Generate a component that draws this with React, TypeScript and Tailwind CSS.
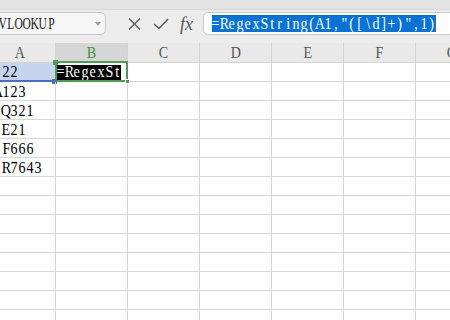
import React from "react";

const columns = ["A", "B", "C", "D", "E", "F", "G"];

// column A is scrolled a little, so its first letters sit under the left edge
const valuesA: { text: string; shift: boolean }[] = [
  { text: "22", shift: false },
  { text: "A123", shift: true },
  { text: "Q321", shift: false },
  { text: "E21", shift: false },
  { text: "F666", shift: false },
  { text: "R7643", shift: false },
];

// half-width serif text: every character takes an 8px cell, like SimSun in the sheet
function Mono({ text, className = "", narrow = false }: { text: string; className?: string; narrow?: boolean }) {
  return (
    <span className={`inline-flex whitespace-nowrap ${className}`}>
      {text.split("").map((ch, i) => (
        <span key={i} className="inline-flex w-[8px] shrink-0 justify-center">
          <span className={`inline-block ${narrow ? "scale-x-[0.72]" : "scale-x-[0.88]"}`}>{ch}</span>
        </span>
      ))}
    </span>
  );
}

function HeaderRow() {
  return (
    <div className="flex h-[20px] ml-[-16px] bg-[#e9e9e9]">
      {columns.map((c) => {
        const active = c === "B";
        return (
          <div
            key={c}
            className={`flex w-[72px] shrink-0 items-center justify-center border-r border-[#d3d3d3] pt-[1px] text-[16px] leading-none ${
              active
                ? "bg-[#d6d6d6] text-[#3f8f46] border-b-2 border-b-[#4f9a55]"
                : "text-[#555555] border-b border-b-[#d3d3d3]"
            }`}
          >
            <Mono text={c} />
          </div>
        );
      })}
    </div>
  );
}

function Row({ index }: { index: number }) {
  const value = valuesA[index];
  return (
    <div className="flex h-[19px] ml-[-16px]">
      {columns.map((c) => {
        if (c === "A") {
          const selected = index === 0;
          return (
            <div
              key={c}
              className={`relative flex w-[72px] shrink-0 items-center border-r border-[#d6d6d6] pt-[1px] text-[16px] leading-none text-black ${
                value?.shift ? "pl-[10px]" : "pl-[18px]"
              } ${selected ? "bg-[#c6d5ef] border-b-2 border-b-[#4a6fb7]" : "border-b border-b-[#d6d6d6]"}`}
            >
              {value ? <Mono text={value.text} /> : null}
            </div>
          );
        }
        if (c === "B" && index === 0) {
          return (
            <div key={c} className="relative flex w-[72px] shrink-0 items-center border-r border-b border-[#d6d6d6] pl-[1px]">
              <Mono text="=RegexSt" className="h-[15px] items-center bg-black text-[16px] leading-none text-white" />
              <div className="absolute -top-[2px] -left-[1px] -right-[1px] -bottom-[1px] border-2 border-[#4f9a55]" />
              <div className="absolute -top-[3px] -left-[3px] h-[5px] w-[5px] bg-[#4f9a55]" />
              <div className="absolute -bottom-[3px] -right-[3px] h-[5px] w-[5px] bg-[#4f9a55] border border-white" />
              <div className="absolute -bottom-[3px] -left-[4px] h-[5px] w-[5px] bg-[#4a6fb7]" />
            </div>
          );
        }
        return <div key={c} className="w-[72px] shrink-0 border-r border-b border-[#d6d6d6]" />;
      })}
    </div>
  );
}

export default function App() {
  return (
    <div className="flex h-[320px] w-[450px] flex-col overflow-hidden bg-[#ececec] [font-family:'Liberation_Serif',serif]">
      <div className="h-[10px] shrink-0 border-b border-[#d9d9d9] bg-[#e3e3e3]" />

      <div className="flex h-[33px] shrink-0 items-start pt-[2px]">
        <div className="ml-[-12px] flex h-[23px] w-[118px] shrink-0 items-center justify-between rounded-[5px] border border-[#c9c9c9] bg-[#f6f6f6] pl-[10px] pr-[4px]">
          <Mono text="VLOOKUP" narrow className="text-[16px] leading-none text-[#222222]" />
          <svg width="6" height="4" viewBox="0 0 6 4">
            <path d="M0 0 L6 0 L3 4 Z" fill="#9a9a9a" />
          </svg>
        </div>

        <div className="ml-[22px] flex h-[23px] items-center">
          <svg width="13" height="12" viewBox="0 0 13 12">
            <path d="M1 0.5 L12 11.5 M12 0.5 L1 11.5" stroke="#5a5a5a" strokeWidth="1.4" fill="none" />
          </svg>
        </div>
        <div className="ml-[12px] flex h-[23px] items-center">
          <svg width="16" height="12" viewBox="0 0 16 12">
            <path d="M1 6 L6 10.5 L15 1" stroke="#5a5a5a" strokeWidth="1.5" fill="none" />
          </svg>
        </div>
        <div className="ml-[11px] flex h-[23px] items-center">
          <span className="text-[18px] italic leading-none text-[#555555]">fx</span>
        </div>

        <div className="ml-[10px] mr-[-20px] flex h-[23px] flex-1 items-center rounded-[5px] border border-[#c9c9c9] bg-white pl-[8px]">
          <Mono
            text={'=RegexString(A1,"([\\d]+)",1)'}
            className="h-[17px] items-center bg-[#0a72d3] text-[16px] leading-none text-white"
          />
        </div>
      </div>

      <div className="flex-1 bg-white">
        <HeaderRow />
        {Array.from({ length: 14 }).map((_, i) => (
          <Row key={i} index={i} />
        ))}
      </div>
    </div>
  );
}
